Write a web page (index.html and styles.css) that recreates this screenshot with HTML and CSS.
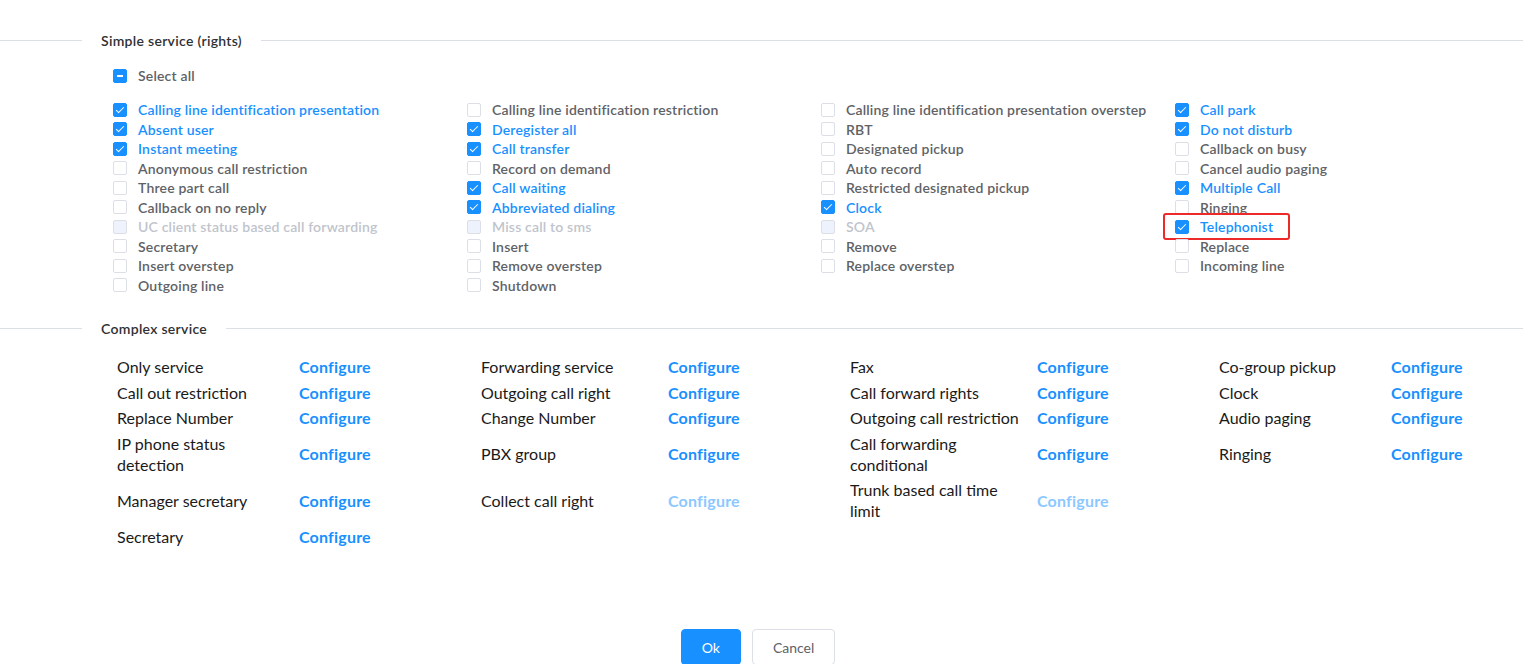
FILE: index.html
```html
<!DOCTYPE html>
<html>
<head>
<meta charset="utf-8">
<link rel="stylesheet" href="styles.css">
</head>
<body>
<div class="page">
  <div class="sec-head"><span class="line-left"></span><span class="sec-title">Simple service (rights)</span><span class="line-right"></span></div>

  <div class="select-all">
    <label class="cb indeterminate"><span class="box"></span><span class="txt">Select all</span></label>
  </div>

  <div class="cb-grid">
    <div class="cb-col">
      <label class="cb checked"><span class="box"></span><span class="txt">Calling line identification presentation</span></label>
      <label class="cb checked"><span class="box"></span><span class="txt">Absent user</span></label>
      <label class="cb checked"><span class="box"></span><span class="txt">Instant meeting</span></label>
      <label class="cb"><span class="box"></span><span class="txt">Anonymous call restriction</span></label>
      <label class="cb"><span class="box"></span><span class="txt">Three part call</span></label>
      <label class="cb"><span class="box"></span><span class="txt">Callback on no reply</span></label>
      <label class="cb disabled"><span class="box"></span><span class="txt">UC client status based call forwarding</span></label>
      <label class="cb"><span class="box"></span><span class="txt">Secretary</span></label>
      <label class="cb"><span class="box"></span><span class="txt">Insert overstep</span></label>
      <label class="cb"><span class="box"></span><span class="txt">Outgoing line</span></label>
    </div>
    <div class="cb-col">
      <label class="cb"><span class="box"></span><span class="txt">Calling line identification restriction</span></label>
      <label class="cb checked"><span class="box"></span><span class="txt">Deregister all</span></label>
      <label class="cb checked"><span class="box"></span><span class="txt">Call transfer</span></label>
      <label class="cb"><span class="box"></span><span class="txt">Record on demand</span></label>
      <label class="cb checked"><span class="box"></span><span class="txt">Call waiting</span></label>
      <label class="cb checked"><span class="box"></span><span class="txt">Abbreviated dialing</span></label>
      <label class="cb disabled"><span class="box"></span><span class="txt">Miss call to sms</span></label>
      <label class="cb"><span class="box"></span><span class="txt">Insert</span></label>
      <label class="cb"><span class="box"></span><span class="txt">Remove overstep</span></label>
      <label class="cb"><span class="box"></span><span class="txt">Shutdown</span></label>
    </div>
    <div class="cb-col">
      <label class="cb"><span class="box"></span><span class="txt">Calling line identification presentation overstep</span></label>
      <label class="cb"><span class="box"></span><span class="txt">RBT</span></label>
      <label class="cb"><span class="box"></span><span class="txt">Designated pickup</span></label>
      <label class="cb"><span class="box"></span><span class="txt">Auto record</span></label>
      <label class="cb"><span class="box"></span><span class="txt">Restricted designated pickup</span></label>
      <label class="cb checked"><span class="box"></span><span class="txt">Clock</span></label>
      <label class="cb disabled"><span class="box"></span><span class="txt">SOA</span></label>
      <label class="cb"><span class="box"></span><span class="txt">Remove</span></label>
      <label class="cb"><span class="box"></span><span class="txt">Replace overstep</span></label>
    </div>
    <div class="cb-col">
      <label class="cb checked"><span class="box"></span><span class="txt">Call park</span></label>
      <label class="cb checked"><span class="box"></span><span class="txt">Do not disturb</span></label>
      <label class="cb"><span class="box"></span><span class="txt">Callback on busy</span></label>
      <label class="cb"><span class="box"></span><span class="txt">Cancel audio paging</span></label>
      <label class="cb checked"><span class="box"></span><span class="txt">Multiple Call</span></label>
      <label class="cb"><span class="box"></span><span class="txt">Ringing</span></label>
      <label class="cb checked highlighted"><span class="box"></span><span class="txt">Telephonist</span></label>
      <label class="cb"><span class="box"></span><span class="txt">Replace</span></label>
      <label class="cb"><span class="box"></span><span class="txt">Incoming line</span></label>
    </div>
  </div>

  <div class="sec-head complex-head"><span class="line-left"></span><span class="sec-title">Complex service</span><span class="line-right"></span></div>

  <div class="cx-grid">
    <div class="cx-label c1">Only service</div><a class="cfg">Configure</a>
    <div class="cx-label c2">Forwarding service</div><a class="cfg">Configure</a>
    <div class="cx-label c3">Fax</div><a class="cfg">Configure</a>
    <div class="cx-label c4">Co-group pickup</div><a class="cfg">Configure</a>

    <div class="cx-label c1">Call out restriction</div><a class="cfg">Configure</a>
    <div class="cx-label c2">Outgoing call right</div><a class="cfg">Configure</a>
    <div class="cx-label c3">Call forward rights</div><a class="cfg">Configure</a>
    <div class="cx-label c4">Clock</div><a class="cfg">Configure</a>

    <div class="cx-label c1">Replace Number</div><a class="cfg">Configure</a>
    <div class="cx-label c2">Change Number</div><a class="cfg">Configure</a>
    <div class="cx-label c3">Outgoing call restriction</div><a class="cfg">Configure</a>
    <div class="cx-label c4">Audio paging</div><a class="cfg">Configure</a>

    <div class="cx-label c1">IP phone status detection</div><a class="cfg">Configure</a>
    <div class="cx-label c2">PBX group</div><a class="cfg">Configure</a>
    <div class="cx-label c3">Call forwarding conditional</div><a class="cfg">Configure</a>
    <div class="cx-label c4">Ringing</div><a class="cfg">Configure</a>

    <div class="cx-label c1">Manager secretary</div><a class="cfg">Configure</a>
    <div class="cx-label c2">Collect call right</div><a class="cfg off">Configure</a>
    <div class="cx-label c3">Trunk based call time limit</div><a class="cfg off">Configure</a>
    <div class="cx-label c4"></div><span></span>

    <div class="cx-label c1">Secretary</div><a class="cfg">Configure</a>
    <div class="cx-label c2"></div><span></span>
    <div class="cx-label c3"></div><span></span>
    <div class="cx-label c4"></div><span></span>
  </div>

  <div class="actions">
    <button class="btn primary">Ok</button>
    <button class="btn">Cancel</button>
  </div>
</div>
</body>
</html>
```
FILE: styles.css
```css
html, body {
  margin: 0;
  padding: 0;
  background: #fff;
  overflow: hidden;
}
.page {
  width: 1523px;
  height: 664px;
  font-family: "Lato", "Liberation Sans", sans-serif;
  overflow: hidden;
}
.sec-head {
  display: flex;
  align-items: center;
  height: 20px;
  margin-top: 30px;
}
.line-left {
  width: 82px;
  height: 1px;
  background: #dcdfe6;
}
.line-right {
  flex: 1;
  height: 1px;
  background: #dcdfe6;
}
.sec-title {
  padding: 0 19px 0 19px;
  font-size: 14px;
  font-weight: 600;
  letter-spacing: 0.3px;
  color: #303133;
  white-space: nowrap;
}
.select-all {
  padding-left: 113px;
  margin-top: 16px;
}
.cb-grid {
  display: grid;
  grid-template-columns: 354px 354px 354px 354px;
  padding-left: 113px;
  margin-top: 14.5px;
}
.cb-col {
  display: flex;
  flex-direction: column;
}
.cb {
  position: relative;
  display: flex;
  align-items: center;
  height: 19.5px;
  font-size: 14px;
  font-weight: 600;
  letter-spacing: 0.18px;
  color: #606266;
  white-space: nowrap;
}
.box {
  position: relative;
  box-sizing: border-box;
  width: 14px;
  height: 14px;
  border: 1px solid #dcdfe6;
  border-radius: 2px;
  background: #fff;
  margin-right: 11px;
  flex: none;
}
.cb.checked { color: #1890ff; }
.cb.indeterminate { color: #606266; }
.cb.checked .box, .cb.indeterminate .box {
  background: #1890ff;
  border-color: #1890ff;
}
.cb.checked .box::after {
  content: "";
  position: absolute;
  left: 4px;
  top: 1px;
  width: 3px;
  height: 7px;
  border: 1px solid #fff;
  border-left: 0;
  border-top: 0;
  transform: rotate(45deg);
}
.cb.indeterminate .box::after {
  content: "";
  position: absolute;
  left: 3px;
  right: 3px;
  top: 5px;
  height: 2px;
  background: #fff;
}
.cb.disabled { color: #c0c4cc; }
.cb.disabled .box {
  background: #edf2fc;
  border-color: #dcdfe6;
}
.cb.highlighted::before {
  content: "";
  position: absolute;
  left: -12px;
  top: -4px;
  width: 127px;
  height: 27px;
  box-sizing: border-box;
  border: 2px solid #ec2a2a;
  border-radius: 3px;
}
.complex-head { margin-top: 23px; }
.cx-grid {
  display: grid;
  grid-template-columns: 182px 182px 187px 182px 187px 182px 172px auto;
  padding-left: 117px;
  margin-top: 16px;
  align-items: center;
}
.cx-label {
  font-size: 16px;
  line-height: 21px;
  padding: 2.25px 0;
  color: #1a1a1a;
}
.cx-label.c1 { padding-right: 22px; }
.cx-label.c2 { padding-right: 12px; }
.cx-label.c3 { padding-right: 12px; }
.cfg {
  font-size: 16px;
  font-weight: 700;
  letter-spacing: 0.2px;
  color: #1890ff;
  line-height: 21px;
}
.cfg.off { color: #8cc8ff; }
.actions {
  display: flex;
  justify-content: center;
  gap: 11px;
  margin-top: 80px;
  padding-right: 7px;
}
.btn {
  height: 36px;
  padding: 0 20px;
  border: 1px solid #dcdfe6;
  border-radius: 4px;
  background: #fff;
  color: #606266;
  font-family: "Lato", "Liberation Sans", sans-serif;
  font-size: 14px;
}
.btn.primary {
  background: #1890ff;
  border-color: #1890ff;
  color: #fff;
}
```
